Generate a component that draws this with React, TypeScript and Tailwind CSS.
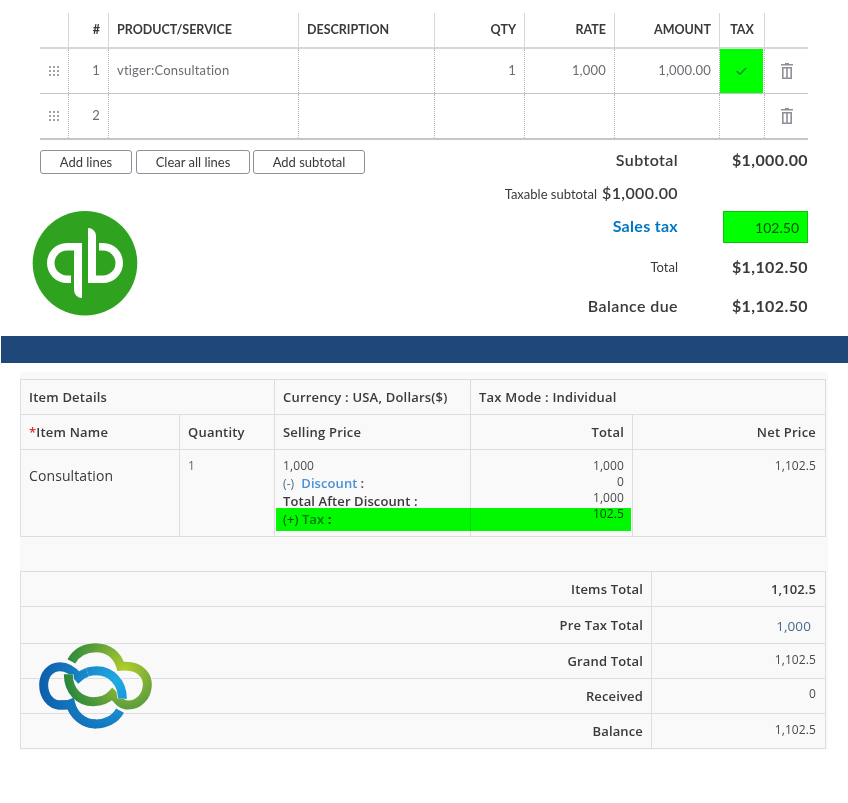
import { Check } from "lucide-react";
import type { ReactNode } from "react";

function Grip() {
  return (
    <svg width="11" height="11" viewBox="0 0 11 11" fill="#a0a3a8">
      {[0, 4, 8].map((x) =>
        [0, 4, 8].map((y) => <rect key={`${x}-${y}`} x={x} y={y} width="2" height="2" />)
      )}
    </svg>
  );
}

function Trash() {
  return (
    <svg width="12" height="16" viewBox="0 0 12 16" fill="#8d9096" className="ml-[1px]">
      <path d="M4 0h4v1h4v1.6H0V1h4z" />
      <path fillRule="evenodd" d="M1 4h10v12H1zM2.6 5.5v9h2.6v-9zM6.8 5.5v9h2.6v-9z" />
    </svg>
  );
}

function HeadCell({ children, right, last, center }: { children?: ReactNode; right?: boolean; last?: boolean; center?: boolean }) {
  return (
    <div
      className={`flex items-center px-2 text-[12.5px] font-bold text-[#393a3d] border-[#d4d7dc] ${
        right ? "justify-end" : ""
      } ${center ? "justify-center" : ""} ${last ? "" : "border-r"}`}
    >
      {children}
    </div>
  );
}

function BodyCell({ children, right, last, center }: { children?: ReactNode; right?: boolean; last?: boolean; center?: boolean }) {
  return (
    <div
      className={`flex items-center px-2 text-[13px] tracking-[0.2px] text-[#6b6c72] border-[#b5b7bb] ${
        right ? "justify-end" : ""
      } ${center ? "justify-center" : ""} ${last ? "" : "border-r border-dotted"}`}
    >
      {children}
    </div>
  );
}

function GreenCell() {
  return (
    <div className="border-r border-dotted border-[#b5b7bb]">
      <div className="w-[43px] h-[44px] bg-[#00ff00] flex items-center justify-center">
        <Check size={13} strokeWidth={3} className="text-[#0f8f28]" />
      </div>
    </div>
  );
}

const cols = "grid grid-cols-[29px_40px_190px_136px_90px_90px_105px_45px_43px]";

function QbLogo() {
  return (
    <svg width="106" height="106" viewBox="32 210 106 106" className="-ml-[8px] mt-[36px]">
      <circle cx="85" cy="263.3" r="52.3" fill="#2fa31f" />
      <path
        fill="#fff"
        d="M82 243H67A20 20 0 0 0 67 283H71V275.5H67A12.5 12.5 0 0 1 67 250.5H74V290A8 8 0 0 0 82 298Z"
      />
      <path
        fill="#fff"
        d="M88 283H103A20 20 0 0 0 103 243H99V250.5H103A12.5 12.5 0 0 1 103 275.5H96V236A8 8 0 0 0 88 228Z"
      />
    </svg>
  );
}

function VtigerLogo() {
  const green = "M214 124C232 92 262 83 288 83C325 83 352 105 362 139C375 138 385 138 392 140C425 145 443 170 442 195C441 230 415 255 385 255C360 255 350 235 337 222C320 240 300 245 280 245C240 245 205 215 205 163";
  const blue = "M360 272C345 300 315 312 288 312C250 312 220 285 212 252C205 255 190 255 180 255C150 255 131 225 131 195C131 165 150 140 180 140C205 140 222 155 236 172C255 155 275 152 290 152C335 152 368 190 367 236";
  const blueTop = "M262 156C272 153 282 152 290 152C335 152 368 190 367 236";
  const blueLow = "M170 255C185 255 205 255 212 252C220 285 250 312 288 312";
  return (
    <svg
      width="200"
      height="130"
      viewBox="0 0 600 390"
      fill="none"
      className="absolute left-0 top-[620px] pointer-events-none"
    >
      <defs>
        <radialGradient id="vg" gradientUnits="userSpaceOnUse" cx="375" cy="150" r="215">
          <stop offset="0" stopColor="#b3cf2b" />
          <stop offset="0.45" stopColor="#6ba53a" />
          <stop offset="1" stopColor="#0d7b3c" />
        </radialGradient>
        <radialGradient id="vb" gradientUnits="userSpaceOnUse" cx="350" cy="185" r="240">
          <stop offset="0" stopColor="#20abe3" />
          <stop offset="0.6" stopColor="#1478bf" />
          <stop offset="1" stopColor="#0d5ca8" />
        </radialGradient>
      </defs>
      <path d={blue} stroke="url(#vb)" strokeWidth="27" />
      <path d={green} stroke="#f9f9f9" strokeWidth="31" />
      <path d={green} stroke="url(#vg)" strokeWidth="27" />
      <path d={blueTop} stroke="#f9f9f9" strokeWidth="31" />
      <path d={blueTop} stroke="url(#vb)" strokeWidth="27" />
      <path d={blueLow} stroke="url(#vb)" strokeWidth="27" />
    </svg>
  );
}

function C({ children, className = "" }: { children?: ReactNode; className?: string }) {
  return <div className={`border-r border-b border-[#dddddd] ${className}`}>{children}</div>;
}

function TotalRow({ label, value, h, valueClass = "" }: { label: string; value: string; h: string; valueClass?: string }) {
  return (
    <div className={`grid grid-cols-[631px_174px] ${h}`}>
      <C className="flex items-center justify-end pr-[8px] pt-[2px] text-[13px] font-semibold text-[#3a3a3a] tracking-[0.15px]">{label}</C>
      <C className={`flex justify-end pr-[9px] ${valueClass}`}>{value}</C>
    </div>
  );
}

export default function App() {
  return (
    <div className="relative w-[848px] h-[803px] bg-white overflow-hidden [font-family:Lato,sans-serif]">
      <div className="h-[336px] px-[40px] pt-[13px]">
        <div className={`${cols} h-[36px] border-b-2 border-[#d4d7dc]`}>
          <HeadCell />
          <HeadCell right>#</HeadCell>
          <HeadCell>PRODUCT/SERVICE</HeadCell>
          <HeadCell>DESCRIPTION</HeadCell>
          <HeadCell right>QTY</HeadCell>
          <HeadCell right>RATE</HeadCell>
          <HeadCell right>AMOUNT</HeadCell>
          <HeadCell center>TAX</HeadCell>
          <HeadCell last />
        </div>
        <div className={`${cols} h-[45px] border-b border-[#c4c6ca]`}>
          <BodyCell center><Grip /></BodyCell>
          <BodyCell right>1</BodyCell>
          <BodyCell>vtiger:Consultation</BodyCell>
          <BodyCell />
          <BodyCell right>1</BodyCell>
          <BodyCell right>1,000</BodyCell>
          <BodyCell right>1,000.00</BodyCell>
          <GreenCell />
          <BodyCell last center><Trash /></BodyCell>
        </div>
        <div className={`${cols} h-[46px] border-b-2 border-[#c4c6ca]`}>
          <BodyCell center><Grip /></BodyCell>
          <BodyCell right>2</BodyCell>
          <BodyCell />
          <BodyCell />
          <BodyCell />
          <BodyCell />
          <BodyCell />
          <BodyCell />
          <BodyCell last center><Trash /></BodyCell>
        </div>

        <div className="flex">
          <div className="w-[325px] pt-[10px]">
            <div className="flex text-[13px] text-[#393a3d]">
              <button className="w-[92px] h-[24px] pt-[1px] border border-[#8d9096] rounded-[3px] mr-[4px]">Add lines</button>
              <button className="w-[114px] h-[24px] pt-[1px] border border-[#8d9096] rounded-[3px] mr-[3px]">Clear all lines</button>
              <button className="w-[112px] h-[24px] pt-[1px] border border-[#8d9096] rounded-[3px]">Add subtotal</button>
            </div>
            <QbLogo />
          </div>
          <div className="flex-1 text-[#393a3d]">
            <div className="grid grid-cols-[1fr_130px] h-[39px] items-center text-right">
              <div className="text-[16px] font-semibold tracking-[0.4px]">Subtotal</div>
              <div className="text-[16px] font-bold tracking-[0.4px]">$1,000.00</div>
            </div>
            <div className="grid grid-cols-[1fr_130px] h-[27px] items-center text-right">
              <div>
                <span className="text-[13px] mr-[5px]">Taxable subtotal</span>
                <span className="text-[16px] font-semibold tracking-[0.4px]">$1,000.00</span>
              </div>
              <div />
            </div>
            <div className="grid grid-cols-[1fr_130px] h-[42px] items-center text-right">
              <div className="text-[16px] font-bold text-[#0077c5] tracking-[0.3px] pb-[2px]">Sales tax</div>
              <div className="flex justify-end">
                <div className="w-[85px] h-[32px] bg-[#00ff00] border border-[#12c012] flex items-center justify-end pr-[8px] text-[14px] text-[#0d4d0d]">102.50</div>
              </div>
            </div>
            <div className="grid grid-cols-[1fr_130px] h-[38px] items-center text-right">
              <div className="text-[13px] pt-[2px]">Total</div>
              <div className="text-[16px] font-bold tracking-[0.4px]">$1,102.50</div>
            </div>
            <div className="grid grid-cols-[1fr_130px] h-[40px] items-center text-right">
              <div className="text-[16px] font-semibold tracking-[0.4px]">Balance due</div>
              <div className="text-[16px] font-bold tracking-[0.4px]">$1,102.50</div>
            </div>
          </div>
        </div>
      </div>

      <div className="ml-[1px] h-[27px] bg-[#1f4778]" />

      <div className="mt-[9px] ml-[20px] w-[808px] h-[378px] bg-[#f9f9f9] pt-[7px] [font-family:'Open_Sans',sans-serif] text-[#4a4a4a] text-[12px] tracking-[0.1px] relative">
        <div className="w-[806px] border-l border-t border-[#dddddd]">
          <div className="grid grid-cols-[254px_196px_355px] h-[35px] text-[13px] font-semibold text-[#3a3a3a] tracking-[0.2px]">
            <C className="flex items-center pl-[8px] pt-[2px]">Item Details</C>
            <C className="flex items-center pl-[8px] pt-[2px]">Currency : USA, Dollars($)</C>
            <C className="flex items-center pl-[8px] pt-[2px]">Tax Mode : Individual</C>
          </div>
          <div className="grid grid-cols-[159px_95px_196px_162px_193px] h-[35px] text-[13px] font-semibold text-[#3a3a3a] tracking-[0.2px]">
            <C className="flex items-center pl-[8px] pt-[2px]"><span className="text-[#e03030]">*</span>Item Name</C>
            <C className="flex items-center pl-[8px] pt-[2px]">Quantity</C>
            <C className="flex items-center pl-[8px] pt-[2px]">Selling Price</C>
            <C className="flex items-center justify-end pr-[8px] pt-[2px]">Total</C>
            <C className="flex items-center justify-end pr-[9px] pt-[2px]">Net Price</C>
          </div>
          <div className="grid grid-cols-[159px_95px_196px_162px_193px] h-[87px]">
            <C className="pl-[8px] pt-[15px] text-[14px] text-[#3a3a3a]">Consultation</C>
            <C className="pl-[8px] pt-[7px] text-[#4a6a8a]">1</C>
            <C className="pl-[8px] pt-[7px]">
              <div className="h-[17px] leading-[18px]">1,000</div>
              <div className="h-[18px] leading-[18px]">
                <span className="text-[#4a6a8a]">(-)</span>
                <span className="ml-[7px] text-[13px] font-semibold text-[#4a90d9]">Discount</span>
                <span className="ml-[3px] font-semibold text-[13px]">:</span>
              </div>
              <div className="h-[18px] leading-[18px] text-[13px] font-semibold text-[#3a3a3a]">Total After Discount :</div>
              <div className="h-[18px] leading-[18px] text-[13px]">(+) <span className="font-semibold text-[#777777]">Tax</span> <span className="font-bold">:</span></div>
            </C>
            <C className="pr-[8px] pt-[8px] text-right leading-[16px]">
              <div>1,000</div>
              <div>0</div>
              <div>1,000</div>
              <div>102.5</div>
            </C>
            <C className="pr-[9px] pt-[8px] text-right leading-[16px]">1,102.5</C>
          </div>
        </div>

        <div className="absolute left-[256px] top-[136px] w-[355px] h-[23px] bg-[#00ff00] mix-blend-multiply" />

        <div className="mt-[34px] w-[806px] border-l border-t border-[#dddddd]">
          <TotalRow h="h-[35px]" label="Items Total" value="1,102.5" valueClass="items-center pt-[1px] text-[13px] font-semibold text-[#3a3a3a]" />
          <TotalRow h="h-[37px]" label="Pre Tax Total" value="1,000" valueClass="items-center pt-[3px] !pr-[14px] text-[13.5px] text-[#4a6a8a]" />
          <TotalRow h="h-[35px]" label="Grand Total" value="1,102.5" valueClass="pt-[7px]" />
          <TotalRow h="h-[35px]" label="Received" value="0" valueClass="pt-[6px]" />
          <TotalRow h="h-[35px]" label="Balance" value="1,102.5" valueClass="pt-[7px]" />
        </div>
      </div>

      <VtigerLogo />
    </div>
  );
}
